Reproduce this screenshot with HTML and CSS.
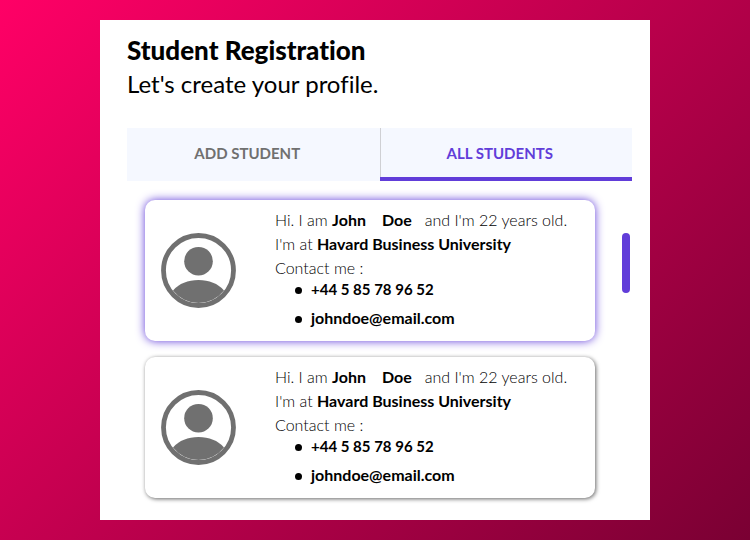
FILE: index.html
```html
<!DOCTYPE html>
<html lang="en">
<head>
<meta charset="utf-8">
<meta name="viewport" content="width=device-width, initial-scale=1">
<title>Student Registration</title>
<link rel="stylesheet" href="styles.css">
</head>
<body>
<svg class="defs" aria-hidden="true">
  <symbol id="avatar" viewBox="0 0 75 75">
    <circle cx="37.500" cy="37.500" r="35" fill="none" stroke="#707070" stroke-width="4.800"/>
    <circle cx="37.500" cy="28.200" r="14.300" fill="#707070"/>
    <path d="M12 57.500C18 50.500 27 47 37.500 47S57 50.500 63 57.500A32.300 32.300 0 0 1 12 57.500Z" fill="#707070"/>
  </symbol>
</svg>
<main class="panel">
  <header class="heading">
    <h1 class="title">Student Registration</h1>
    <p class="subtitle">Let's create your profile.</p>
  </header>
  <nav class="tabs">
    <button class="tab" type="button">ADD STUDENT</button>
    <button class="tab tab-active" type="button">ALL STUDENTS</button>
  </nav>
  <section class="students">
    <div class="cards">
      <article class="card card-selected">
        <svg class="avatar" role="img" aria-label="Avatar"><use href="#avatar"/></svg>
        <div class="details">
          <p class="line">Hi. I am <strong class="first">John</strong><strong class="last">Doe</strong>and I'm 22 years old.</p>
          <p class="line">I'm at <strong>Havard Business University</strong></p>
          <p class="line">Contact me :</p>
          <ul class="contacts">
            <li class="phone">+44 5 85 78 96 52</li>
            <li>johndoe@email.com</li>
          </ul>
        </div>
      </article>
      <article class="card">
        <svg class="avatar" role="img" aria-label="Avatar"><use href="#avatar"/></svg>
        <div class="details">
          <p class="line">Hi. I am <strong class="first">John</strong><strong class="last">Doe</strong>and I'm 22 years old.</p>
          <p class="line">I'm at <strong>Havard Business University</strong></p>
          <p class="line">Contact me :</p>
          <ul class="contacts">
            <li class="phone">+44 5 85 78 96 52</li>
            <li>johndoe@email.com</li>
          </ul>
        </div>
      </article>
    </div>
    <div class="thumb"></div>
  </section>
</main>
</body>
</html>
```
FILE: styles.css
```css
* {
  box-sizing: border-box;
}

body {
  margin: 0;
  min-height: 100vh;
  padding: 20px 100px;
  background: linear-gradient(135deg, #ff0066, #7a0033);
  color: #000;
  font: 16px/24px Lato, sans-serif;
  font-variant-ligatures: none;
}

.defs {
  position: absolute;
  width: 0;
  height: 0;
}

h1, p, ul {
  margin: 0;
  padding: 0;
}

.panel {
  background: #fff;
  padding: 13px 18px 22px 27px;
}

.title {
  font-size: 26px;
  line-height: 34px;
  font-weight: 900;
}

.subtitle {
  font-size: 24px;
  line-height: 34px;
}

.tabs {
  display: flex;
  margin-top: 27px;
  background: #f5f8ff;
}

.tab {
  flex: 1;
  height: 53px;
  border: 0;
  border-bottom: 4px solid transparent;
  padding: 0 12px 0 0;
  background: none;
  color: #707070;
  font: 700 15px/24px Lato, sans-serif;
}

.tab-active {
  color: #613dd9;
  border-bottom-color: #613dd9;
  box-shadow: inset 1px 0 #cfd0d4;
}

.students {
  display: flex;
  gap: 27px;
  padding: 19px 2px 0 18px;
}

.cards {
  flex: 1;
  display: grid;
  gap: 16px;
}

.card {
  display: flex;
  align-items: center;
  gap: 39px;
  padding: 8px 16px 14px;
  border-radius: 10px;
  background: #fff;
  box-shadow: 1px 1px 4px rgba(0, 0, 0, 0.6);
}

.card-selected {
  box-shadow: 0 0 10px #613dd9;
}

.avatar {
  flex: none;
  width: 75px;
  height: 75px;
  margin-top: 6px;
}

.details {
  flex: 1;
  font-weight: 300;
  white-space: nowrap;
}

.first {
  margin-right: 16px;
}

.last {
  margin-right: 13px;
}

strong, .contacts {
  font-weight: 700;
}

.contacts {
  display: grid;
  gap: 11px;
  padding-left: 20px;
  line-height: 18px;
  list-style: none;
}

.contacts li {
  display: flex;
  align-items: center;
  gap: 9px;
}

.contacts li::before {
  content: "";
  width: 7px;
  height: 7px;
  margin-top: 2px;
  border-radius: 50%;
  background: #000;
}

.phone {
  font-size: 15px;
}

.thumb {
  width: 8px;
  height: 60px;
  margin-top: 33px;
  border-radius: 4px;
  background: #613dd9;
}
```
